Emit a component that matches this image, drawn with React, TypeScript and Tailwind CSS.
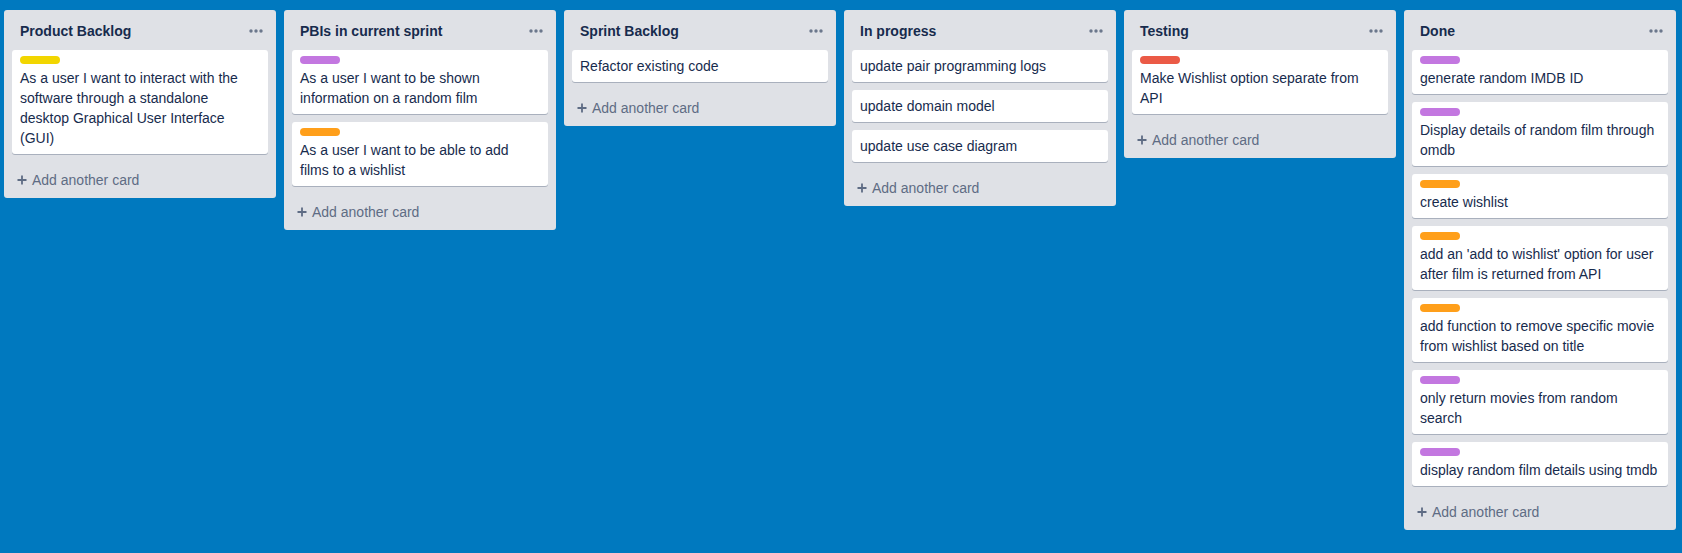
import React from "react";

type Card = { text: string; label?: string };
type List = { title: string; cards: Card[] };

const Y = "bg-[#f2d600]";
const P = "bg-[#c377e0]";
const O = "bg-[#ff9f1a]";
const R = "bg-[#eb5a46]";

const lists: List[] = [
  {
    title: "Product Backlog",
    cards: [
      {
        label: Y,
        text: "As a user I want to interact with the software through a standalone desktop Graphical User Interface (GUI)",
      },
    ],
  },
  {
    title: "PBIs in current sprint",
    cards: [
      { label: P, text: "As a user I want to be shown information on a random film" },
      { label: O, text: "As a user I want to be able to add films to a wishlist" },
    ],
  },
  { title: "Sprint Backlog", cards: [{ text: "Refactor existing code" }] },
  {
    title: "In progress",
    cards: [
      { text: "update pair programming logs" },
      { text: "update domain model" },
      { text: "update use case diagram" },
    ],
  },
  {
    title: "Testing",
    cards: [{ label: R, text: "Make Wishlist option separate from API" }],
  },
  {
    title: "Done",
    cards: [
      { label: P, text: "generate random IMDB ID" },
      { label: P, text: "Display details of random film through omdb" },
      { label: O, text: "create wishlist" },
      { label: O, text: "add an 'add to wishlist' option for user after film is returned from API" },
      { label: O, text: "add function to remove specific movie from wishlist based on title" },
      { label: P, text: "only return movies from random search" },
      { label: P, text: "display random film details using tmdb" },
    ],
  },
];

function Dots() {
  return (
    <svg width="14" height="4" viewBox="0 0 14 4" className="block">
      <circle cx="2" cy="2" r="1.7" fill="#6b778c" />
      <circle cx="7" cy="2" r="1.7" fill="#6b778c" />
      <circle cx="12" cy="2" r="1.7" fill="#6b778c" />
    </svg>
  );
}

function Plus() {
  return (
    <svg width="10" height="10" viewBox="0 0 10 10" className="block">
      <path d="M5 0.5V9.5M0.5 5H9.5" stroke="#5e6c84" strokeWidth="1.8" />
    </svg>
  );
}

function ListColumn({ list }: { list: List }) {
  return (
    <div className="w-[272px] shrink-0 rounded-[3px] bg-[#dfe1e6] self-start">
      <div className="flex h-10 items-center justify-between pl-4 pr-[13px] pt-[2px]">
        <span className="text-[14px] font-bold leading-5 text-[#172b4d]">{list.title}</span>
        <Dots />
      </div>
      <div className="flex flex-col gap-2 px-2">
        {list.cards.map((c, i) => (
          <div
            key={i}
            className="rounded-[3px] bg-white px-2 pt-[6px] pb-[6px] shadow-[0_1px_0_rgba(9,30,66,0.25)]"
          >
            {c.label && <div className={`mb-1 h-2 w-10 rounded-full ${c.label}`} />}
            <div className="text-[14px] leading-5 text-[#172b4d]">{c.text}</div>
          </div>
        ))}
      </div>
      <div className="mt-2 flex h-9 items-center gap-[5px] pl-[13px] text-[14px] text-[#5e6c84]">
        <Plus />
        <span>Add another card</span>
      </div>
    </div>
  );
}

export default function App() {
  return (
    <div
      className="flex h-[553px] w-full items-start gap-2 overflow-hidden bg-[#0079bf] pl-1 pt-[10px]"
      style={{ fontFamily: '"Liberation Sans", Arial, sans-serif' }}
    >
      {lists.map((l) => (
        <ListColumn key={l.title} list={l} />
      ))}
    </div>
  );
}
